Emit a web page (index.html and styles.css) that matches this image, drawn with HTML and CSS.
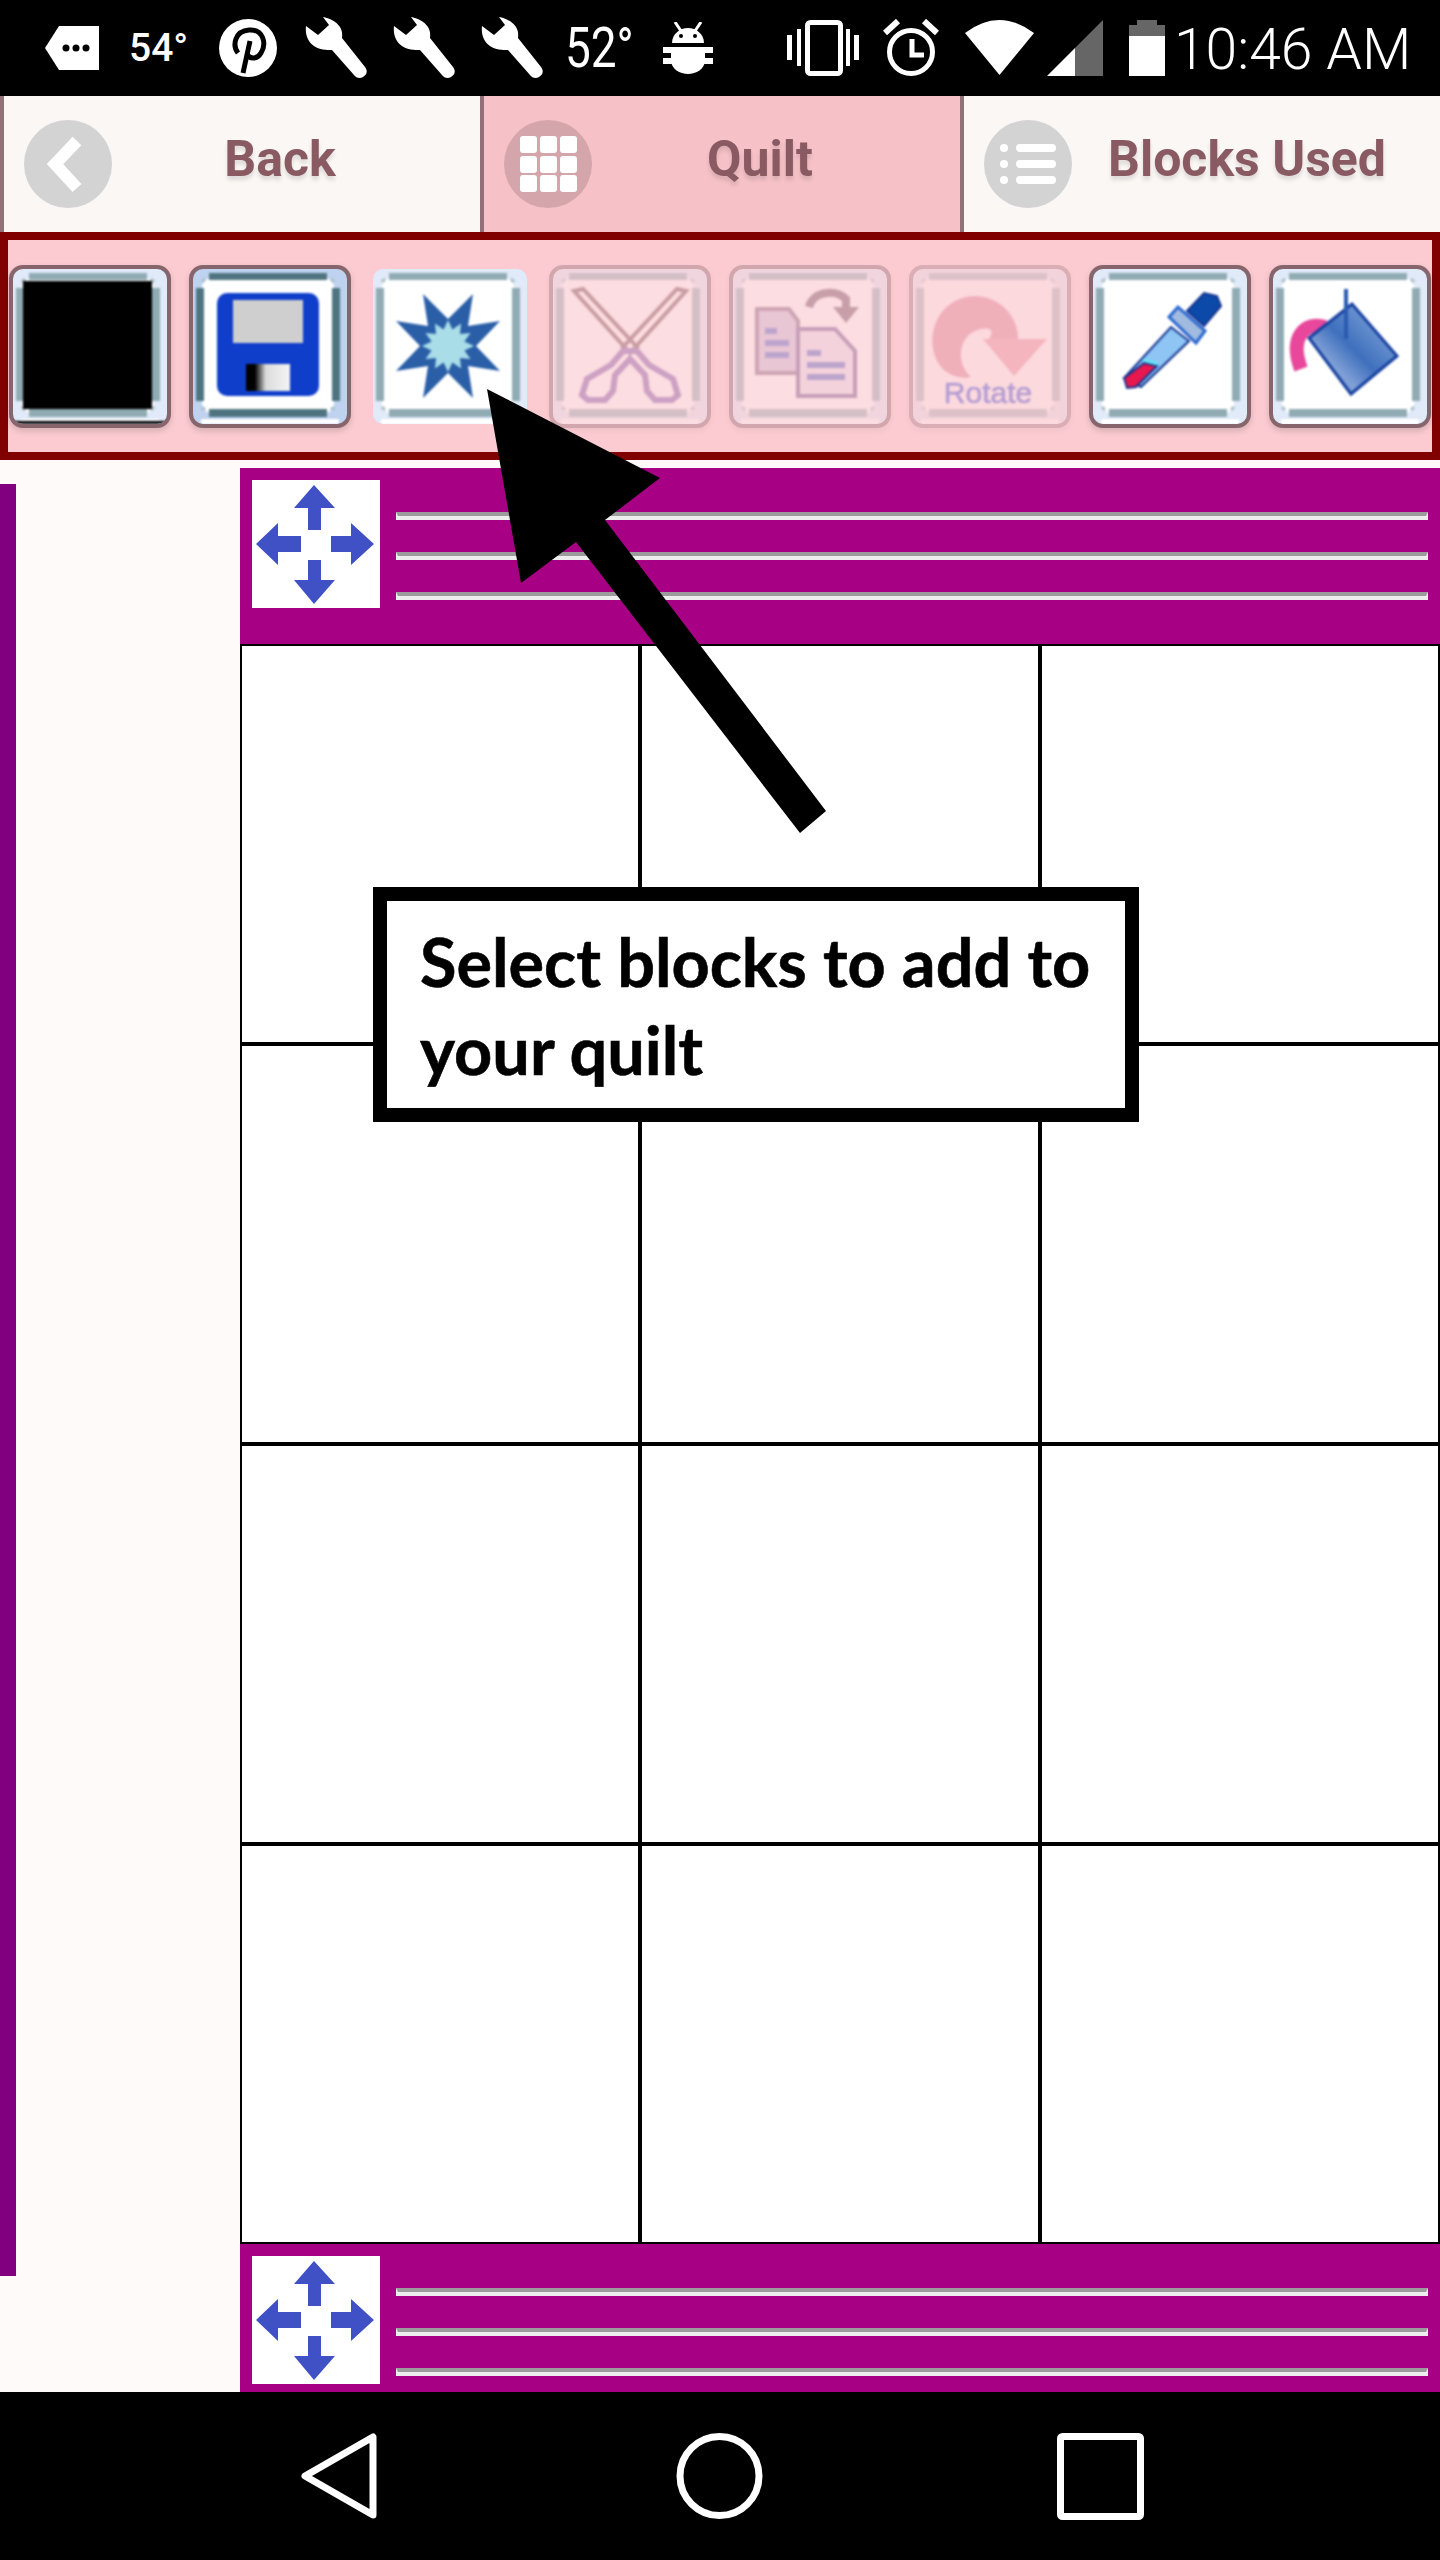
FILE: index.html
```html
<!DOCTYPE html>
<html lang="en">
<head>
    <meta charset="UTF-8">
    <title>Quilt</title>
    <link rel="stylesheet" href="styles.css">
</head>
<body>
<svg class="defs" width="0" height="0">
    <defs>
        <g id="frame">
            <rect x="9" y="9" width="132" height="135" rx="9" fill="#fff"/>
            <rect class="bar" x="16" y="4" width="118" height="7"/>
            <rect class="bar" x="16" y="140" width="118" height="8"/>
            <rect class="bar" x="3" y="19" width="8" height="113"/>
            <rect class="bar" x="139" y="19" width="8" height="113"/>
            <path d="M9 13l3-3M141 13l-3-3M9 138l3 3M141 138l-3 3" stroke="#a9bfc6" stroke-width="3"/>
            <rect x="8" y="150" width="138" height="5" fill="#fff"/>
        </g>
        <g id="move" fill="#3f51c4">
            <path d="M62 5L83 28H69V50H56V28H42Z"/>
            <path d="M62 124L83 100H69V80H56V100H42Z"/>
            <path d="M4 64L26 43V56H49V72H26V85Z"/>
            <path d="M122 64L99 43V56H79V72H99V85Z"/>
        </g>
        <path id="wrench" fill="#fff" d="M18 0C24 1 31 4 35 10C38 15 37 19 37 21L60 50C63 54 62 58 58 60C55 62 51 61 49 58L27 33C22 33 14 33 9 29C3 25 0 18 1 9L13 18L24 8Z"/>
        <linearGradient id="shutter">
            <stop offset="0.2" stop-color="#000"/>
            <stop offset="0.45" stop-color="#ddd"/>
            <stop offset="1" stop-color="#f4f4f4"/>
        </linearGradient>
        <linearGradient id="bucket" x1="0" y1="1" x2="1" y2="0">
            <stop offset="0.3" stop-color="#7f9fd6"/>
            <stop offset="0.5" stop-color="#3f70bd"/>
            <stop offset="1" stop-color="#94b4e2"/>
        </linearGradient>
    </defs>
</svg>

<div class="status-bar">
    <svg class="st-hex" width="54" height="44" viewBox="0 0 54 44">
        <path fill="#fff" d="M14 0H54V44H14L0 22Z"/>
        <circle cx="21" cy="22" r="3.5"/><circle cx="31" cy="22" r="3.5"/><circle cx="41" cy="22" r="3.5"/>
    </svg>
    <span class="st-temp">54°</span>
    <svg class="st-pin" width="58" height="58" viewBox="0 0 58 58">
        <circle cx="29" cy="29" r="29" fill="#fff"/>
        <path fill="none" stroke="#000" stroke-width="5" d="M19 34C13 26 16 12 30 11C44 10 48 24 42 34C38 41 30 40 28 35"/>
        <path fill="none" stroke="#000" stroke-width="5" d="M31 22L24 54"/>
    </svg>
    <svg class="st-wrench" width="62" height="62" viewBox="0 0 62 62"><use href="#wrench"/></svg>
    <svg class="st-wrench2" width="62" height="62" viewBox="0 0 62 62"><use href="#wrench"/></svg>
    <svg class="st-wrench2" width="62" height="62" viewBox="0 0 62 62"><use href="#wrench"/></svg>
    <span class="st-temp2">52°</span>
    <svg class="st-bug" width="50" height="52" viewBox="0 0 50 52">
        <path stroke="#fff" stroke-width="3" d="M12 0L18 9M38 0L32 9"/>
        <path fill="#fff" d="M9 21C9 12 17 6 25 6C33 6 41 12 41 21Z"/>
        <circle cx="18" cy="14" r="2"/><circle cx="32" cy="14" r="2"/>
        <path fill="#fff" d="M8 25H42V38C42 47 33 52 25 52C17 52 8 47 8 38Z"/>
        <rect x="0" y="25" width="50" height="6" fill="#fff"/>
        <rect x="0" y="36" width="50" height="6" fill="#fff"/>
    </svg>
    <svg class="st-vibrate" width="72" height="56" viewBox="0 0 72 56">
        <rect x="20.5" y="2.5" width="33" height="51" rx="3" fill="none" stroke="#fff" stroke-width="5"/>
        <path fill="#fff" d="M0 15H5V40H0ZM10 9H14V46H10ZM59 9H63V46H59ZM67 15H72V40H67Z"/>
    </svg>
    <svg class="st-alarm" width="56" height="57" viewBox="0 0 56 57">
        <circle cx="28" cy="33" r="21.5" fill="none" stroke="#fff" stroke-width="5"/>
        <path fill="none" stroke="#fff" stroke-width="5" d="M29 20V36H41"/>
        <path stroke="#fff" stroke-width="6" d="M2 14L15 2M54 14L41 2"/>
    </svg>
    <svg class="st-wifi" width="69" height="55" viewBox="0 0 69 55">
        <path fill="#fff" d="M0 13Q34 -13 69 13L34.5 55Z"/>
    </svg>
    <svg class="st-signal" width="56" height="56" viewBox="0 0 56 56">
        <path fill="#fff" d="M0 56L28 28V56Z"/>
        <path fill="#666" d="M28 28L56 0V56H28Z"/>
    </svg>
    <svg class="st-battery" width="36" height="56" viewBox="0 0 36 56">
        <path fill="#666" d="M8 0H28V5H36V16H0V5H8Z"/>
        <rect y="16" width="36" height="40" fill="#fff"/>
    </svg>
    <span class="st-time">10:46 AM</span>
</div>

<div class="tabs">
    <div class="tab">
        <svg class="tab-icon" width="88" height="88" viewBox="0 0 88 88">
            <circle cx="44" cy="44" r="44" fill="#d3d3d3"/>
            <path fill="none" stroke="#fff" stroke-width="12" d="M53 21L31 44L53 68"/>
        </svg>
        <span class="tab-label">Back</span>
    </div>
    <div class="tab active">
        <svg class="tab-icon" width="88" height="88" viewBox="0 0 88 88">
            <circle cx="44" cy="44" r="44" fill="#d5a5ac"/>
            <g fill="#fff">
                <rect x="16" y="16" width="17" height="17" rx="3"/><rect x="36" y="16" width="17" height="17" rx="3"/><rect x="56" y="16" width="17" height="17" rx="3"/>
                <rect x="16" y="36" width="17" height="17" rx="3"/><rect x="36" y="36" width="17" height="17" rx="3"/><rect x="56" y="36" width="17" height="17" rx="3"/>
                <rect x="16" y="55" width="17" height="17" rx="3"/><rect x="36" y="55" width="17" height="17" rx="3"/><rect x="56" y="55" width="17" height="17" rx="3"/>
            </g>
        </svg>
        <span class="tab-label">Quilt</span>
    </div>
    <div class="tab last">
        <svg class="tab-icon" width="88" height="88" viewBox="0 0 88 88">
            <circle cx="44" cy="44" r="44" fill="#d3d3d3"/>
            <g fill="#fff">
                <circle cx="20" cy="28" r="4"/><circle cx="20" cy="44" r="4"/><circle cx="20" cy="60" r="4"/>
                <rect x="32" y="24" width="40" height="8" rx="4"/><rect x="32" y="40" width="40" height="8" rx="4"/><rect x="32" y="56" width="40" height="8" rx="4"/>
            </g>
        </svg>
        <span class="tab-label">Blocks Used</span>
    </div>
</div>

<div class="toolbar">
    <div class="tool">
        <svg width="154" height="155" viewBox="0 0 154 155">
            <use href="#frame"/>
            <rect x="10" y="12" width="129" height="128" fill="#000"/>
            <rect x="0" y="152" width="154" height="3" fill="#000"/>
        </svg>
    </div>
    <div class="tool save">
        <svg width="154" height="155" viewBox="0 0 154 155">
            <use href="#frame"/>
            <rect x="24" y="24" width="102" height="103" rx="10" fill="#0f3fca"/>
            <rect x="40" y="31" width="70" height="43" fill="#cfcfcf"/>
            <rect x="53" y="95" width="44" height="27" fill="url(#shutter)"/>
        </svg>
    </div>
    <div class="tool plain">
        <svg width="154" height="155" viewBox="0 0 154 155">
            <use href="#frame"/>
            <path fill="#2a5fa8" d="M50 25L75 50L100 25L95 57L127 52L103 77L127 102L95 97L100 129L75 104L50 129L55 97L23 102L47 77L23 52L55 57Z"/>
            <path fill="#a9dde8" d="M75 51L79.4 60.6L88 54.5L87 65L97.5 64L91.4 72.6L101 77L91.4 81.4L97.5 90L87 89L88 99.5L79.4 93.4L75 103L70.6 93.4L62 99.5L63 89L52.5 90L58.6 81.4L49 77L58.6 72.6L52.5 64L63 65L62 54.5L70.6 60.6Z"/>
        </svg>
    </div>
    <div class="tool disabled">
        <svg width="154" height="155" viewBox="0 0 154 155">
            <use href="#frame"/>
            <path fill="none" stroke="#6e4a52" stroke-width="4" d="M21 22L30 20L84 78L77 84ZM133 22L124 20L70 78L77 84Z"/>
            <path fill="none" stroke="#7a55ab" stroke-width="6" d="M70 82L58 96L34 110L29 126L35 131L52 131L60 122L62 106L77 90L92 106L94 122L102 131L119 131L125 126L120 110L96 96L84 82Z"/>
        </svg>
    </div>
    <div class="tool disabled">
        <svg width="154" height="155" viewBox="0 0 154 155">
            <use href="#frame"/>
            <path fill="#c9bdd8" stroke="#7a6080" stroke-width="4" d="M24 40H56L65 52V104H24Z"/>
            <path fill="#e8e0f0" stroke="#6a5090" stroke-width="4" d="M65 60H102L122 82V127H65Z"/>
            <path stroke="#4a60c8" stroke-width="6" d="M74 84H88M74 96H112M74 108H112M32 62H44M32 74H56M32 86H56"/>
            <path fill="none" stroke="#6a5060" stroke-width="8" d="M76 38C80 22 102 20 113 30V40"/>
            <path fill="#6a5060" d="M100 38H126L113 54Z"/>
        </svg>
    </div>
    <div class="tool disabled faint">
        <svg width="154" height="155" viewBox="0 0 154 155">
            <use href="#frame"/>
            <path fill="#d76b82" d="M105 70C106 40 72 16 42 32C16 46 12 84 32 102C40 108 50 110 58 108C44 96 44 70 62 62C78 56 82 62 76 70Z"/>
            <path fill="#e77e93" d="M70 70H134L101 107Z"/>
            <text class="rotate-text" x="75" y="134" text-anchor="middle">Rotate</text>
        </svg>
    </div>
    <div class="tool">
        <svg width="154" height="155" viewBox="0 0 154 155">
            <use href="#frame"/>
            <path fill="#0b4aa8" stroke="#15358f" stroke-width="2" d="M94 42L111 24L124 27L128 37L111 57Z"/>
            <path fill="#8ec5f5" stroke="#15358f" stroke-width="2" d="M78 58L96 72L48 118L31 109Z"/>
            <path fill="#e8174e" stroke="#15358f" stroke-width="2" d="M31 109L51 94L64 97L43 118L34 119Z"/>
            <path stroke="#62e6f2" stroke-width="3" d="M50 91L65 95"/>
            <path fill="#a0bbdf" stroke="#2a66d0" stroke-width="3" d="M76 48L85 38L112 62L103 74Z"/>
        </svg>
    </div>
    <div class="tool">
        <svg width="154" height="155" viewBox="0 0 154 155">
            <use href="#frame"/>
            <path fill="none" stroke="#e8479b" stroke-width="14" d="M52 58C32 52 16 68 28 100"/>
            <path fill="url(#bucket)" stroke="#1740a0" stroke-width="3" d="M36 69L79 35L124 87L78 125Z"/>
            <path stroke="#2a5ab0" stroke-width="4" d="M73 20V70"/>
        </svg>
    </div>
</div>

<div class="workspace">
    <div class="side-strip"></div>
    <div class="quilt">
        <div class="drag-bar">
            <svg class="move-handle" width="128" height="128" viewBox="0 0 128 128"><use href="#move"/></svg>
            <div class="grips"><hr class="grip"><hr class="grip"><hr class="grip"></div>
        </div>
        <div class="grid">
            <div class="cell"></div><div class="cell"></div><div class="cell"></div>
            <div class="cell"></div><div class="cell"></div><div class="cell"></div>
            <div class="cell"></div><div class="cell"></div><div class="cell"></div>
            <div class="cell"></div><div class="cell"></div><div class="cell"></div>
        </div>
        <div class="drag-bar bottom">
            <svg class="move-handle" width="128" height="128" viewBox="0 0 128 128"><use href="#move"/></svg>
            <div class="grips"><hr class="grip"><hr class="grip"><hr class="grip"></div>
        </div>
    </div>
</div>

<div class="nav-bar">
    <svg class="nav-back" width="76" height="86" viewBox="0 0 76 86">
        <path fill="none" stroke="#fff" stroke-width="7" stroke-linejoin="round" d="M72 4V82L4 43Z"/>
    </svg>
    <svg class="nav-home" width="87" height="86" viewBox="0 0 87 86">
        <circle cx="43.5" cy="43" r="39.5" fill="none" stroke="#fff" stroke-width="7"/>
    </svg>
    <svg class="nav-recent" width="87" height="87" viewBox="0 0 87 87">
        <rect x="3.5" y="3.5" width="80" height="80" rx="2" fill="none" stroke="#fff" stroke-width="7"/>
    </svg>
</div>

<!-- tutorial overlay -->
<svg class="arrow" width="360" height="460" viewBox="0 0 360 460">
    <path d="M7 9L180 98L125 140L346 431L320 453L96 162L41 203Z"/>
</svg>
<div class="callout">Select blocks to add to your quilt</div>
</body>
</html>
```
FILE: styles.css
```css
html, body {
    margin: 0;
    padding: 0;
}
body {
    position: relative;
    width: 1440px;
    height: 2560px;
    overflow: hidden;
    display: flex;
    flex-direction: column;
    background: #fffafa;
    font-family: 'Roboto', sans-serif;
}
.defs {
    position: absolute;
}
svg {
    display: block;
    flex: none;
}

/* status bar */
.status-bar {
    height: 96px;
    background: #000;
    color: #fff;
    display: flex;
    align-items: flex-start;
    padding-left: 45px;
    box-sizing: border-box;
}
.st-hex { margin: 26px 0 0 0; }
.st-temp {
    margin: 26px 0 0 30px;
    width: 60px;
    font-size: 39px;
    font-weight: 500;
    line-height: 44px;
}
.st-pin { margin: 19px 0 0 30px; }
.st-wrench { margin: 17px 0 0 28px; }
.st-wrench2 { margin: 17px 0 0 26px; }
.st-temp2 {
    margin: 15px 0 0 25px;
    width: 64px;
    font-size: 56px;
    line-height: 66px;
    white-space: nowrap;
    transform: translateX(-3px) scaleX(0.82);
    transform-origin: left center;
}
.st-bug { margin: 22px 0 0 31px; }
.st-vibrate { margin: 20px 0 0 74px; }
.st-alarm { margin: 19px 0 0 24px; }
.st-wifi { margin: 20px 0 0 26px; }
.st-signal { margin: 20px 0 0 13px; }
.st-battery { margin: 20px 0 0 26px; }
.st-time {
    margin: 17px 0 0 9px;
    font-size: 57px;
    font-weight: 300;
    line-height: 66px;
    white-space: nowrap;
}

/* tabs */
.tabs {
    height: 136px;
    display: flex;
}
.tab {
    flex: none;
    width: 480px;
    box-sizing: border-box;
    border-left: 4px solid #917078;
    padding: 0 32px 0 20px;
    display: flex;
    align-items: center;
    background: #fbf7f5;
}
.tab.active {
    background: #f6c2c8;
}
.tab.last {
    padding-right: 18px;
}
.tab-label {
    flex: 1;
    margin-bottom: 10px;
    text-align: center;
    color: #895a62;
    font-size: 50px;
    font-weight: 700;
    text-shadow: 0 4px 4px rgba(0, 0, 0, 0.12);
}

/* toolbar */
.toolbar {
    height: 228px;
    box-sizing: border-box;
    border: 8px solid #800000;
    background: #fbcbd1;
    display: flex;
    align-items: center;
    gap: 18px;
    padding: 0 0 0 1px;
}
.tool {
    --bar: #90abb3;
    flex: none;
    width: 162px;
    height: 163px;
    box-sizing: border-box;
    border: 4px solid #86656c;
    border-radius: 14px;
    background: #e0eaf8;
    overflow: hidden;
    box-shadow: 0 3px 6px rgba(0, 0, 0, 0.15);
}
.tool svg {
    filter: blur(1px);
}
.bar {
    fill: var(--bar);
}
.tool.save {
    --bar: #4f7480;
    background: #bfd2f0;
}
.tool.plain {
    border-color: transparent;
    background-clip: padding-box;
    box-shadow: none;
}
.tool.disabled {
    opacity: 0.35;
}
.tool.faint {
    opacity: 0.28;
}
.rotate-text {
    font-family: 'Liberation Sans', sans-serif;
    font-size: 30px;
    fill: #0028d8;
    stroke: #0028d8;
    stroke-width: 0.6px;
}

/* quilt area */
.workspace {
    flex: 1;
    display: flex;
    justify-content: space-between;
    align-items: flex-start;
    padding-top: 8px;
}
.side-strip {
    width: 16px;
    height: 1792px;
    margin-top: 16px;
    background: #800080;
}
.quilt {
    width: 1200px;
}
.drag-bar {
    height: 176px;
    box-sizing: border-box;
    background: #a80084;
    display: flex;
    padding: 12px 12px 0;
}
.drag-bar.bottom {
    height: 148px;
}
.move-handle {
    background: #fff;
}
.move-handle use {
    filter: blur(0.7px);
}
.grips {
    flex: 1;
    margin-left: 16px;
    padding-top: 32px;
    display: flex;
    flex-direction: column;
    gap: 32px;
}
.grip {
    margin: 0;
    height: 0;
    border-style: solid;
    border-width: 4px 2px;
    border-color: #9c9c9c #eeeeee #eeeeee;
}
.grid {
    display: grid;
    grid-template-columns: repeat(3, 400px);
    grid-auto-rows: 400px;
    background: #fff;
}
.cell {
    box-sizing: border-box;
    border: 2px solid #000;
}

/* nav bar */
.nav-bar {
    height: 168px;
    background: #000;
    display: flex;
    align-items: center;
    padding-left: 301px;
}
.nav-home { margin-left: 299px; }
.nav-recent { margin-left: 294px; }

/* tutorial overlay */
.arrow {
    position: absolute;
    left: 480px;
    top: 380px;
}
.callout {
    position: absolute;
    left: 373px;
    top: 887px;
    width: 766px;
    height: 235px;
    box-sizing: border-box;
    border: 14px solid #000;
    background: #fff;
    padding: 16px 30px 0 33px;
    font-family: 'Lato', sans-serif;
    font-weight: 700;
    font-size: 66.6px;
    line-height: 88px;
    color: #000;
    -webkit-text-stroke: 0.6px #000;
}
```
